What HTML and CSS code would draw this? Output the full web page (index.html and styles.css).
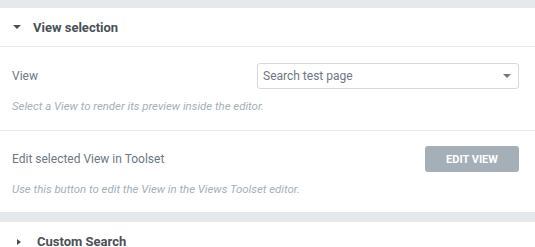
FILE: index.html
```html
<!DOCTYPE html>
<html lang="en">
<head>
    <meta charset="utf-8">
    <title>View selection</title>
    <link rel="stylesheet" href="styles.css">
</head>
<body>
    <div class="panel">
        <div class="section open">
            <div class="section-head">
                <span class="caret down"></span>
                <span class="section-title">View selection</span>
            </div>
            <div class="section-body">
                <!-- choose view -->
                <div class="control">
                    <div class="row">
                        <label class="label">View</label>
                        <div class="select">
                            <span>Search test page</span>
                            <span class="select-arrow"></span>
                        </div>
                    </div>
                    <div class="help">Select a View to render its preview inside the editor.</div>
                </div>
                <!-- edit in toolset -->
                <div class="control">
                    <div class="row">
                        <label class="label">Edit selected View in Toolset</label>
                        <button class="btn" disabled>EDIT VIEW</button>
                    </div>
                    <div class="help">Use this button to edit the View in the Views Toolset editor.</div>
                </div>
            </div>
        </div>

        <div class="section">
            <div class="section-head">
                <span class="caret right"></span>
                <span class="section-title">Custom Search</span>
            </div>
        </div>
    </div>
</body>
</html>
```

FILE: styles.css
```css
:root {
    --bg: #e6e9ec;
    --text-dark: #495157;
    --text: #6d7882;
    --muted: #a4afb7;
}

body {
    margin: 0;
    background: var(--bg);
    font-family: Roboto, "Liberation Sans", Arial, sans-serif;
}

.panel {
    padding-top: 8px;
}

.section {
    background: white;
    margin-bottom: 10px;
}

.section-head {
    display: flex;
    align-items: center;
    height: 39px;
    padding: 0 13px;
    box-sizing: border-box;
}

.section.open .section-head {
    border-bottom: 1px solid var(--bg);
}

.section-title {
    font-size: 13px;
    font-weight: bold;
    color: var(--text-dark);
    margin-left: 12px;
}

.caret {
    width: 0;
    height: 0;
    display: inline-block;
}

.caret.down {
    border-left: 4px solid transparent;
    border-right: 4px solid transparent;
    border-top: 4px solid var(--text-dark);
}

.caret.right {
    border-top: 3.5px solid transparent;
    border-bottom: 3.5px solid transparent;
    border-left: 4px solid var(--text-dark);
    margin: 0 4px 0 4px;
}

.caret.right + .section-title {
    margin-left: 12px;
}

.control {
    padding: 16px 16px 17px 12px;
    border-bottom: 1px solid var(--bg);
}

.control:last-child {
    border-bottom: none;
    padding-top: 15px;
    padding-bottom: 16px;
}

.row {
    display: flex;
    align-items: center;
    justify-content: space-between;
}

.label {
    font-size: 12px;
    color: var(--text);
}

.select {
    width: 262px;
    height: 26px;
    box-sizing: border-box;
    border: 1px solid #d5dadf;
    border-radius: 3px;
    display: flex;
    align-items: center;
    justify-content: space-between;
    padding: 0 7px 0 5px;
    font-size: 12px;
    color: var(--text);
}

.select-arrow {
    border-left: 4px solid transparent;
    border-right: 4px solid transparent;
    border-top: 4px solid var(--text);
}

.btn {
    width: 94px;
    height: 26px;
    border: none;
    border-radius: 3px;
    background: var(--muted);
    color: white;
    font-family: inherit;
    font-size: 11px;
    font-weight: bold;
    padding: 0;
}

.help {
    margin-top: 10px;
    font-size: 11.4px;
    font-style: italic;
    color: var(--muted);
}
```
